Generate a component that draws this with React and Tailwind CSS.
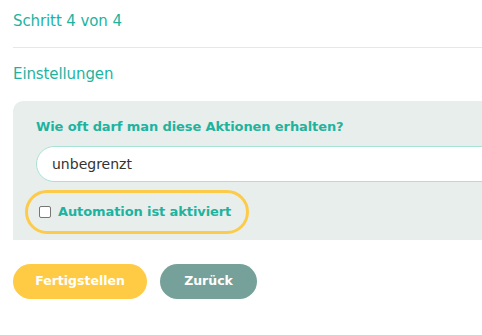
export default function App() {
  return (
    <div className="w-[482px] h-[335px] overflow-hidden bg-white" style={{ fontFamily: '"DejaVu Sans", sans-serif' }}>
      <div className="w-[620px] pl-[13px]">
        {/* Header */}
        <div className="h-[48px] flex items-center pb-[4px] border-b border-[#e6e8e8]">
          <span className="text-[15px] text-[#1eb39f] tracking-[-0.1px]">Schritt 4 von 4</span>
        </div>

        <div className="h-[53px] flex items-center">
          <span className="text-[15px] text-[#1eb39f] tracking-[-0.1px]">Einstellungen</span>
        </div>

        {/* Settings panel */}
        <div className="bg-[#e8eeec] rounded-tl-[10px] pl-[23px] pt-[18px] pb-[6px]">
          <p className="text-[13px] font-bold text-[#1eb39f] leading-[16px] tracking-[-0.1px]">
            Wie oft darf man diese Aktionen erhalten?
          </p>
          <input
            type="text"
            defaultValue="unbegrenzt"
            className="mt-[11px] block w-full h-[36px] rounded-l-full border border-[#a8e2d7] bg-white pl-[15px] text-[14px] text-[#333] outline-none"
          />
          <label className="mt-[8px] -ml-[11px] inline-flex items-center gap-[7px] h-[44px] pl-[11px] pr-[15px] rounded-full border-[3px] border-[#fdcb4a]">
            <span className="w-[12px] h-[12px] rounded-[2px] border border-[#767676] bg-white" />
            <span className="text-[13px] font-bold text-[#1eb39f] tracking-[-0.1px]">Automation ist aktiviert</span>
          </label>
        </div>

        {/* Buttons */}
        <div className="flex gap-[13px] mt-[24px]">
          <button className="h-[35px] w-[134px] rounded-full bg-[#ffcb45] text-white text-[12.5px] font-bold">
            Fertigstellen
          </button>
          <button className="h-[35px] w-[97px] rounded-full bg-[#75a19a] text-white text-[12.5px] font-bold">
            Zurück
          </button>
        </div>
      </div>
    </div>
  )
}
